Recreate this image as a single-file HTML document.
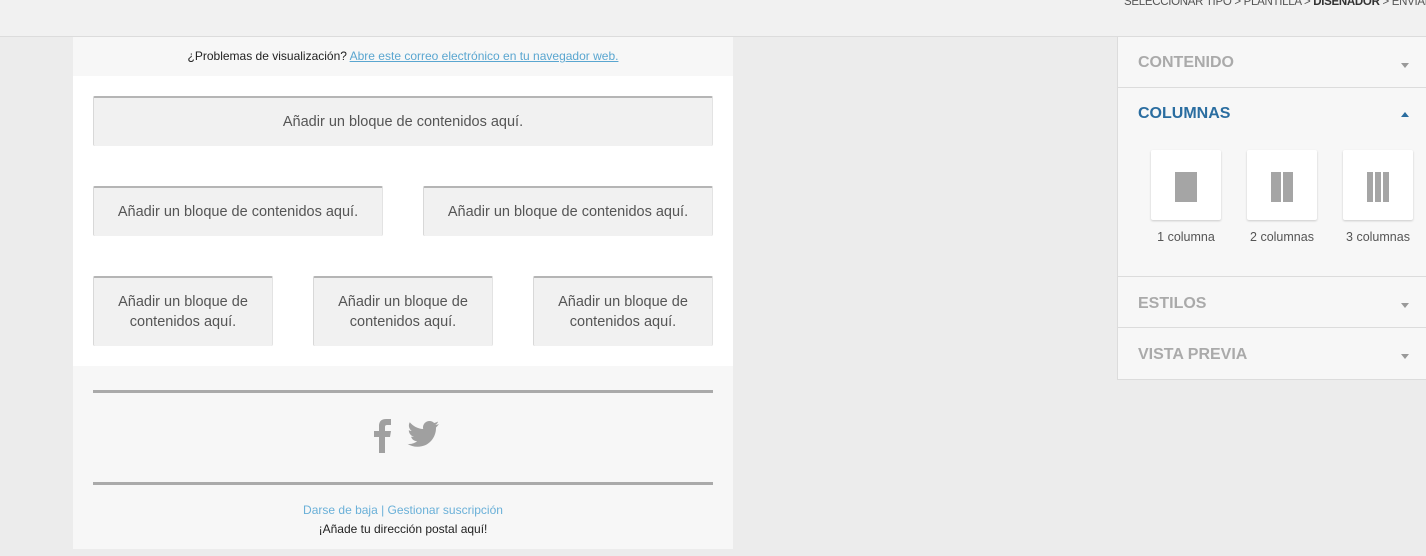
<!DOCTYPE html>
<html><head><meta charset="utf-8"><style>
*{box-sizing:border-box;margin:0;padding:0}
body{width:1426px;height:556px;background:#ececec;font-family:"Liberation Sans",sans-serif;position:relative;overflow:hidden}
.top{position:absolute;left:0;top:0;width:1426px;height:37px;background:#f1f1f1;border-bottom:1px solid #dcdcdc}
.crumb{position:absolute;left:1124px;top:-4px;font-size:11.5px;color:#555;white-space:nowrap;letter-spacing:-0.3px}
.email{position:absolute;left:73px;top:37px;width:660px;height:512px;background:#f7f7f7}
.hdr{height:39px;text-align:center;font-size:12px;line-height:38px;color:#222}
.hdr a{color:#5aa6d0;text-decoration:underline}
.white{position:absolute;top:39px;left:0;width:660px;height:290px;background:#fff}
.b{position:absolute;background:#f1f1f1;border-top:2px solid #b5b5b5;border-left:1px solid #d8d8d8;border-right:1px solid #e3e3e3;color:#555;font-size:14.5px;display:flex;align-items:center;justify-content:center;text-align:center;line-height:20px;border-radius:2px}
.line{position:absolute;left:20px;width:620px;height:3px;background:#aaa}
.panel{position:absolute;left:1117px;top:37px;width:309px;height:343px;background:#f7f7f7;border-left:1px solid #dcdcdc;border-bottom:1px solid #dcdcdc}
.sec{position:absolute;left:0;width:309px;border-bottom:1px solid #dcdcdc}
.sec .t{position:absolute;left:20px;font-size:16px;font-weight:bold;color:#aaa}
.arr{position:absolute;right:18px;width:0;height:0;border-left:4px solid transparent;border-right:4px solid transparent}
.tile{position:absolute;top:113px;width:70px;height:70px;background:#fff;box-shadow:0 1px 2px rgba(0,0,0,.18);border-radius:2px}
.lab{position:absolute;top:193px;font-size:12.5px;color:#555;width:100px;text-align:center}
</style></head><body>
<div class="top"><div class="crumb">SELECCIONAR TIPO &gt; PLANTILLA &gt; <b style="color:#333">DISEÑADOR</b> &gt; ENVIAR</div></div>
<div class="email">
 <div class="hdr">¿Problemas de visualización? <a>Abre este correo electrónico en tu navegador web.</a></div>
 <div class="white">
  <div class="b" style="left:20px;top:20px;width:620px;height:50px">Añadir un bloque de contenidos aquí.</div>
  <div class="b" style="left:20px;top:110px;width:290px;height:50px">Añadir un bloque de contenidos aquí.</div>
  <div class="b" style="left:350px;top:110px;width:290px;height:50px">Añadir un bloque de contenidos aquí.</div>
  <div class="b" style="left:20px;top:200px;width:180px;height:70px">Añadir un bloque de<br>contenidos aquí.</div>
  <div class="b" style="left:240px;top:200px;width:180px;height:70px">Añadir un bloque de<br>contenidos aquí.</div>
  <div class="b" style="left:460px;top:200px;width:180px;height:70px">Añadir un bloque de<br>contenidos aquí.</div>
 </div>
 <div class="line" style="top:353px"></div>
 <svg style="position:absolute;left:300px;top:382px" width="70" height="34" viewBox="0 0 70 34">
  <path fill="#a0a0a0" d="M6 34V18H1v-6h5V7c0-5 3-7 7-7h5v6h-4c-1.5 0-2 .7-2 2v4h6l-1 6h-5v16z"/>
  <path fill="#a0a0a0" d="M66 5c-1.2.5-2.4.9-3.700 1 1.300-.8 2.300-2 2.800-3.500-1.200.7-2.600 1.200-4 1.500C59.900 2.700 58.300 2 56.500 2c-3.600 0-6.500 2.900-6.500 6.500 0 .5 0 1 .2 1.500C44.800 9.700 40 7.100 36.800 3.200c-.6 1-.9 2.100-.9 3.300 0 2.300 1.100 4.300 2.900 5.400-1.100 0-2.100-.3-3-.8v.1c0 3.200 2.300 5.800 5.200 6.400-.5.1-1.100.2-1.700.2-.4 0-.8 0-1.200-.1.8 2.600 3.200 4.500 6.100 4.500-2.200 1.700-5 2.800-8.100 2.800-.5 0-1 0-1.600-.1 2.900 1.800 6.300 2.900 10 2.900 12 0 18.500-9.900 18.500-18.500v-.8C64 7.400 65.100 6.300 66 5z"/>
 </svg>
 <div class="line" style="top:445px"></div>
 <div style="position:absolute;top:466px;width:660px;text-align:center;font-size:12px;color:#6ab0d8">Darse de baja | Gestionar suscripción</div>
 <div style="position:absolute;top:485px;width:660px;text-align:center;font-size:12px;color:#222">¡Añade tu dirección postal aquí!</div>
</div>
<div class="panel">
 <div class="sec" style="top:0;height:51px"><div class="t" style="top:17px">CONTENIDO</div><div class="arr" style="top:26px;border-top:5px solid #999"></div></div>
 <div class="sec" style="top:51px;height:189px"><div class="t" style="top:17px;color:#2a6da0">COLUMNAS</div><div class="arr" style="top:24px;border-bottom:5px solid #2a6da0"></div>
  <div class="tile" style="left:33px;top:62px"><div style="position:absolute;left:24px;top:22px;width:22px;height:30px;background:#a5a5a5"></div></div>
  <div class="tile" style="left:129px;top:62px"><div style="position:absolute;left:24px;top:22px;width:10px;height:30px;background:#a5a5a5"></div><div style="position:absolute;left:36px;top:22px;width:10px;height:30px;background:#a5a5a5"></div></div>
  <div class="tile" style="left:225px;top:62px"><div style="position:absolute;left:24px;top:22px;width:6px;height:30px;background:#a5a5a5"></div><div style="position:absolute;left:32px;top:22px;width:6px;height:30px;background:#a5a5a5"></div><div style="position:absolute;left:40px;top:22px;width:6px;height:30px;background:#a5a5a5"></div></div>
  <div class="lab" style="left:18px;top:142px">1 columna</div>
  <div class="lab" style="left:114px;top:142px">2 columnas</div>
  <div class="lab" style="left:210px;top:142px">3 columnas</div>
 </div>
 <div class="sec" style="top:240px;height:51px"><div class="t" style="top:18px">ESTILOS</div><div class="arr" style="top:26px;border-top:5px solid #999"></div></div>
 <div class="sec" style="top:291px;height:51px;border-bottom:none"><div class="t" style="top:18px">VISTA PREVIA</div><div class="arr" style="top:26px;border-top:5px solid #999"></div></div>
</div>
</body></html>
